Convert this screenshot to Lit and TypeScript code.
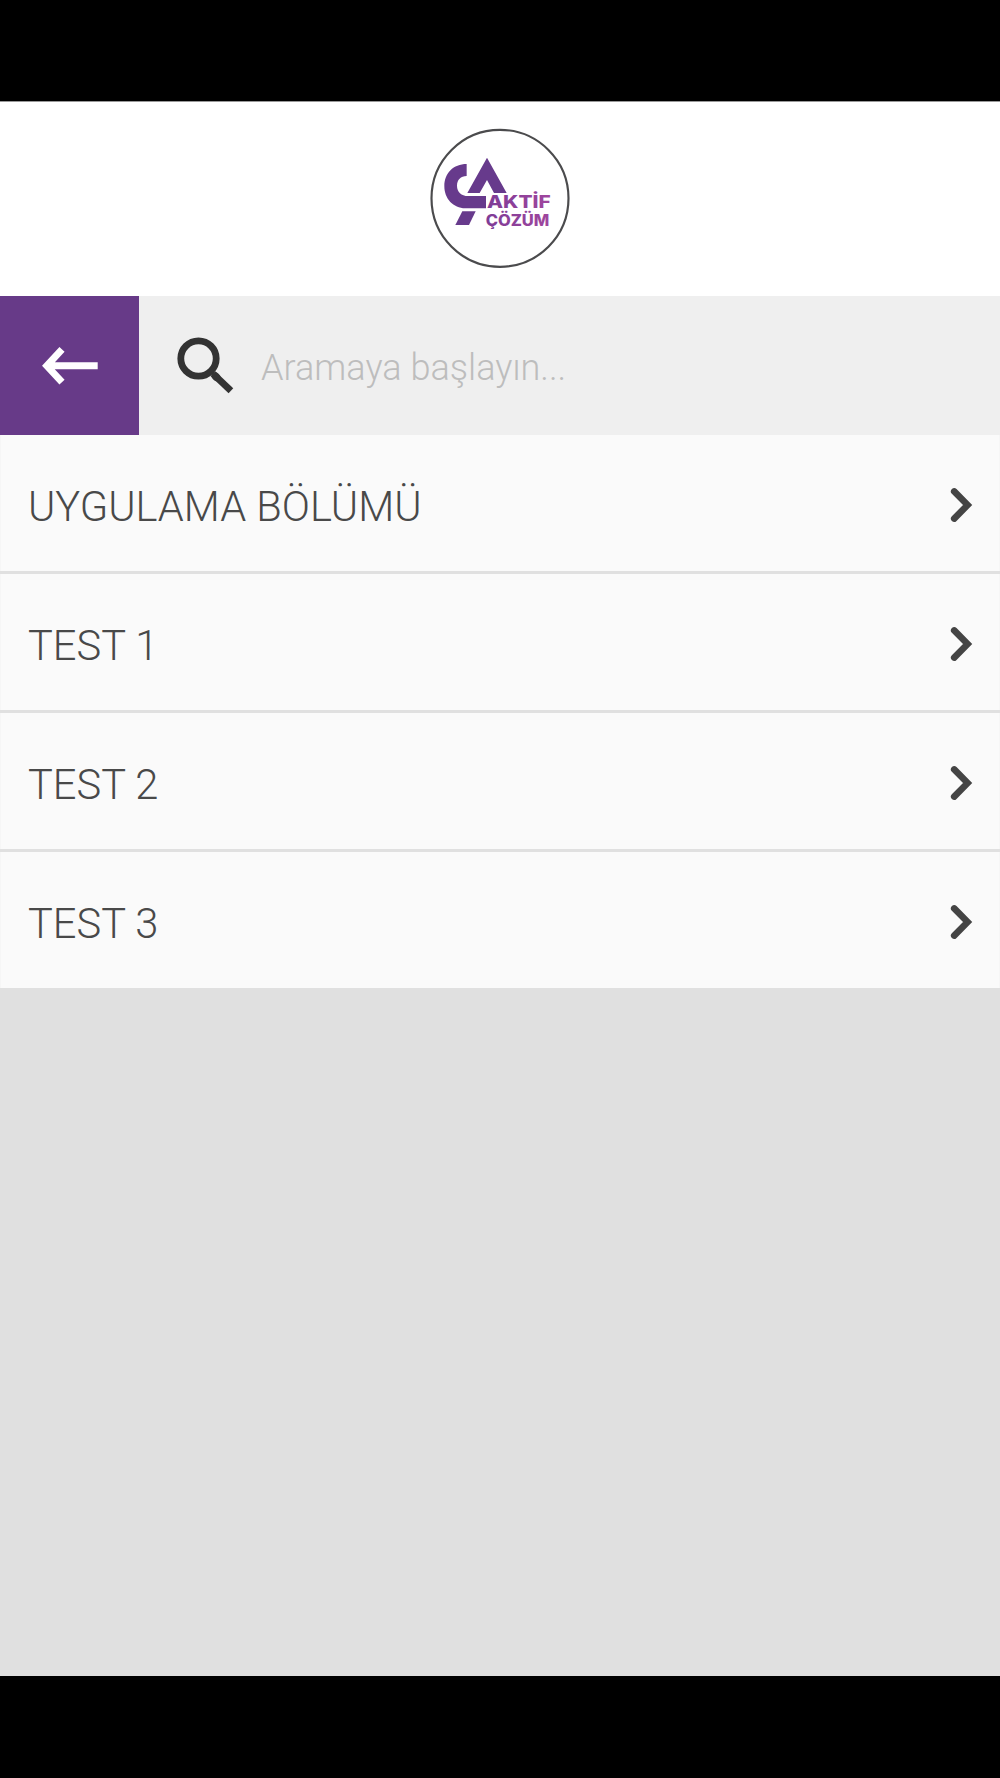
import { LitElement, html, css } from "lit";
import { customElement, property } from "lit/decorators.js";

@customElement("brand-logo")
class BrandLogo extends LitElement {
  static styles = css`
    :host { display: block; width: 160px; height: 160px; }
    .art { display: block; width: 100%; height: 100%; }
    .word { font-family: Inter, "Liberation Sans", sans-serif; font-weight: 800; }
  `;
  render() {
    return html`
      <svg class="art" viewBox="0 -3 480 480" role="img" aria-label="Aktif Çözüm">
        <defs>
          <linearGradient id="ink" gradientUnits="userSpaceOnUse" x1="195" y1="0" x2="392" y2="0">
            <stop offset="0" stop-color="#7d3c96" />
            <stop offset="1" stop-color="#a0469e" />
          </linearGradient>
        </defs>
        <circle cx="240" cy="235" r="205.5" fill="#fff" stroke="#4b4b4d" stroke-width="6.5" />
        <g fill="#673a8c">
          <path d="M140 132V168C122 168 111 180 111 197C111 216 124 228 144 228H198V265H136C100 264 73 237 73 198C73 160 100 132 140 132Z" />
          <path d="M201 113L260 219H222L201 180L179 219H142Z" />
          <path d="M127 274H167L147 315H106Z" />
        </g>
        <g class="word" fill="url(#ink)">
          <text x="201" y="265" font-size="51" textLength="191" lengthAdjust="spacingAndGlyphs">AKTİF</text>
          <text x="197" y="318" font-size="46" textLength="191" lengthAdjust="spacingAndGlyphs">ÇÖZÜM</text>
        </g>
      </svg>
    `;
  }
}

@customElement("menu-row")
class MenuRow extends LitElement {
  @property() label = "";
  static styles = css`
    :host {
      display: flex;
      align-items: center;
      justify-content: space-between;
      box-sizing: border-box;
      padding: 4px 26.5px 0 27px;
      background: #fafafa;
      border: 1px solid #f6f6f6;
      border-width: 0 1px;
    }
    .label { font-size: 41.6px; line-height: 50px; font-weight: 300; color: #494949; padding-top: 3px; }
    .chevron { display: block; width: 23px; height: 36px; }
  `;
  render() {
    return html`
      <span class="label">${this.label}</span>
      <svg class="chevron" viewBox="0 0 23 36" fill="none" stroke="#444" stroke-width="6.6">
        <path d="M4.2 4.4L17.6 18L4.2 31.6" stroke-linecap="round" />
      </svg>
    `;
  }
}

@customElement("app-root")
class AppRoot extends LitElement {
  static styles = css`
    :host {
      display: flex;
      flex-direction: column;
      box-sizing: border-box;
      height: 1778px;
      padding: 101px 0 102px;
      background: #000;
      font-family: Roboto, "Liberation Sans", sans-serif;
    }
    .header { flex: 0 0 195px; box-sizing: border-box; display: flex; align-items: center; justify-content: center; background: #fff; border-top: 1px solid #999; padding-bottom: 1px; }
    .search { flex: 0 0 139px; display: flex; background: #efefef; }
    .back { width: 139px; display: flex; align-items: center; justify-content: center; background: #673a88; }
    .back-icon { width: 60px; height: 40px; }
    .field { flex: 1; display: flex; align-items: center; padding-left: 37px; }
    .glass { width: 60px; height: 60px; }
    .hint { margin-left: 25px; padding-top: 4px; font-size: 36.1px; line-height: 44px; font-weight: 300; color: #bdbdbd; }
    .content { flex: 1; background: #e0e0e0; }
    .list { display: grid; grid-auto-rows: 136px; row-gap: 3px; background: #e0e0e0; }
  `;
  render() {
    const items = ["UYGULAMA BÖLÜMÜ", "TEST 1", "TEST 2", "TEST 3"];
    return html`
      <header class="header"><brand-logo></brand-logo></header>
      <div class="search">
        <div class="back">
          <svg class="back-icon" viewBox="0 0 60 40" fill="none" stroke="#fff" stroke-width="7">
            <path d="M57.7 19.8H8M22 3.4L6.8 19.8L22 36.2" />
          </svg>
        </div>
        <div class="field">
          <svg class="glass" viewBox="0 0 60 60" fill="none" stroke="#333">
            <circle cx="22.5" cy="22.5" r="17.7" stroke-width="6.8" />
            <path d="M39.5 40.3L40.5 41.3" stroke-width="7.6" stroke-linecap="round" />
            <path d="M37 37.8L54.9 54.8" stroke-width="6.8" />
          </svg>
          <span class="hint">Aramaya başlayın...</span>
        </div>
      </div>
      <main class="content">
        <div class="list">${items.map((label) => html`<menu-row .label=${label}></menu-row>`)}</div>
      </main>
    `;
  }
}
